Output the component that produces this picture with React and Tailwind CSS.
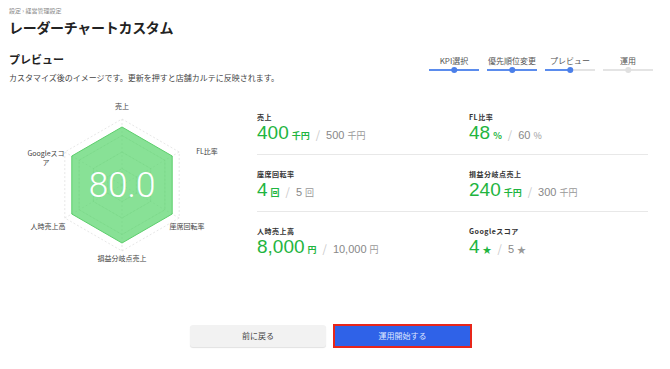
import React from 'react';

const JP = { fontFamily: '"Noto Sans CJK JP", "Noto Sans", sans-serif' };
const NUM = { fontFamily: '"Liberation Sans", "Noto Sans CJK JP", sans-serif' };
const BIG = { fontFamily: 'Roboto, "Liberation Sans", sans-serif' };

const steps = [
  { label: 'KPI選択', state: 'done' },
  { label: '優先順位変更', state: 'done' },
  { label: 'プレビュー', state: 'current' },
  { label: '運用', state: 'todo' },
];

const metrics = [
  { label: '売上', value: '400', unit: '千円', target: '500', targetUnit: '千円' },
  { label: 'FL比率', value: '48', unit: '%', target: '60', targetUnit: '%' },
  { label: '座席回転率', value: '4', unit: '回', target: '5', targetUnit: '回' },
  { label: '損益分岐点売上', value: '240', unit: '千円', target: '300', targetUnit: '千円' },
  { label: '人時売上高', value: '8,000', unit: '円', target: '10,000', targetUnit: '円' },
  { label: 'Googleスコア', value: '4', unit: '★', target: '5', targetUnit: '★' },
];

const CX = 122;
const CY = 87;

const hex = (r) =>
  [-90, -30, 30, 90, 150, 210]
    .map((a) => {
      const t = (a * Math.PI) / 180;
      return `${(CX + r * Math.cos(t)).toFixed(1)},${(CY + r * Math.sin(t)).toFixed(1)}`;
    })
    .join(' ');

const Stepper = () => (
  <div className="flex gap-[8px] pt-[1px]">
    {steps.map((s) => (
      <div key={s.label} className="w-[50px] flex flex-col items-center">
        <span className="text-[8px] leading-[10px] text-[#555]">{s.label}</span>
        <div className="relative w-full h-[6px] mt-[1px]">
          <div
            className={`absolute left-0 right-0 top-[2px] h-[1.5px] ${
              s.state === 'done' ? 'bg-[#5b8ced]' : 'bg-[#e4e4e4]'
            }`}
          />
          {s.state === 'current' && (
            <div className="absolute left-0 w-1/2 top-[2px] h-[1.5px] bg-[#5b8ced]" />
          )}
          <div
            className={`absolute left-1/2 -translate-x-1/2 top-0 w-[5.5px] h-[5.5px] rounded-full ${
              s.state === 'todo' ? 'bg-[#e0e0e0]' : 'bg-[#4b7fe9]'
            }`}
          />
        </div>
      </div>
    ))}
  </div>
);

const Radar = () => (
  <svg width="250" height="172" viewBox="0 0 250 172" style={JP}>
    {[66, 49.5, 33, 16.5].map((r) => (
      <polygon key={r} points={hex(r)} fill="none" stroke="#dcdcdc" strokeWidth="0.7" strokeDasharray="2 2" />
    ))}
    {[-90, -30, 30, 90, 150, 210].map((a) => {
      const t = (a * Math.PI) / 180;
      return (
        <line
          key={a}
          x1={CX}
          y1={CY}
          x2={CX + 66 * Math.cos(t)}
          y2={CY + 66 * Math.sin(t)}
          stroke="#dcdcdc"
          strokeWidth="0.7"
          strokeDasharray="2 2"
        />
      );
    })}
    <polygon points={hex(58)} fill="#5ad66e" fillOpacity="0.72" stroke="#5ccf6c" strokeWidth="1" />
    {[49.5, 33, 16.5].map((r) => (
      <polygon key={'i' + r} points={hex(r)} fill="none" stroke="#6ccf79" strokeWidth="0.5" strokeOpacity="0.35" />
    ))}
    <text x={CX} y={CY + 12} textAnchor="middle" fill="#fff" fontSize="35" style={BIG} fontWeight="300">
      80.0
    </text>
    <g fontSize="7" fill="#444">
      <text x={CX} y="11" textAnchor="middle">売上</text>
      <text x="207" y="56" textAnchor="middle">FL比率</text>
      <text x="187" y="131" textAnchor="middle">座席回転率</text>
      <text x={CX} y="163" textAnchor="middle">損益分岐点売上</text>
      <text x="48" y="131" textAnchor="middle">人時売上高</text>
      <text x="46" y="58" textAnchor="middle">Googleスコ</text>
      <text x="46" y="67" textAnchor="middle">ア</text>
    </g>
  </svg>
);

const Metric = ({ m, last }) => (
  <div className={`h-[56px] pt-[13px] ${last ? '' : 'border-b border-[#e8e8e8]'}`}>
    <div className="text-[7px] leading-[10px] font-bold text-[#333] tracking-[0.5px]">{m.label}</div>
    <div className="flex items-baseline leading-[22px] whitespace-nowrap">
      <span className="text-[19px] text-[#1fb53f]" style={NUM}>{m.value}</span>
      <span className="text-[9px] font-bold text-[#1fb53f] ml-[3px]">{m.unit}</span>
      <span className="text-[11px] text-[#c8c8c8] mx-[6px]">/</span>
      <span className="text-[11px] text-[#888]" style={NUM}>{m.target}</span>
      <span className="text-[9px] text-[#999] ml-[3px]">{m.targetUnit}</span>
    </div>
  </div>
);

export default function App() {
  return (
    <div className="w-[670px] h-[369px] bg-white text-[#222] overflow-hidden" style={JP}>
      <div className="px-[9px] pt-[7px]">
        <div className="text-[6px] leading-[8px] text-[#888]">設定 › 経営管理設定</div>
        <h1 className="text-[14px] leading-[20px] font-bold mt-[2px] tracking-[-0.3px]">レーダーチャートカスタム</h1>

        <div className="flex justify-between mt-[14px]">
          <div>
            <h2 className="text-[11px] leading-[16px] font-bold">プレビュー</h2>
            <p className="text-[8px] leading-[12px] text-[#444] mt-[5px]">
              カスタマイズ後のイメージです。更新を押すと店舗カルテに反映されます。
            </p>
          </div>
          <div className="mr-[8px] mt-[4px]">
            <Stepper />
          </div>
        </div>

        <div className="flex mt-[15px]">
          <div className="w-[248px] -ml-[9px] -mt-[1px]">
            <Radar />
          </div>
          <div className="grid grid-cols-[212px_179px] ml-[9px]">
            {[0, 2, 4].map((i) => (
              <React.Fragment key={i}>
                <Metric m={metrics[i]} last={i === 4} />
                <Metric m={metrics[i + 1]} last={i === 4} />
              </React.Fragment>
            ))}
          </div>
        </div>

        <div className="flex justify-center gap-[7px] mt-[55px] -ml-[8px]">
          <button className="w-[136px] h-[22px] rounded-[3px] bg-[#f2f2f2] shadow-[0_1px_1px_rgba(0,0,0,0.12)] text-[8px] text-[#444]">
            前に戻る
          </button>
          <button className="w-[139px] h-[24px] -mt-[1px] bg-[#2f62e8] border-[2px] border-[#e8261a] text-[8px] text-[#dfe6ff]">
            運用開始する
          </button>
        </div>
      </div>
    </div>
  );
}
